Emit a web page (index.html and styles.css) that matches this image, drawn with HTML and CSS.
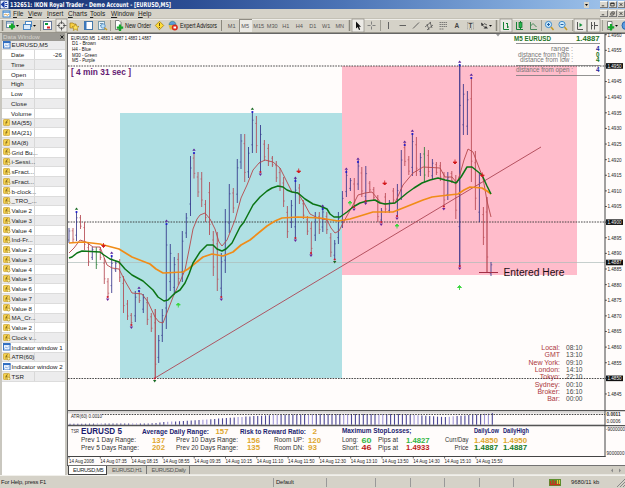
FILE: index.html
```html
<!DOCTYPE html>
<html lang="en">
<head>
<meta charset="utf-8">
<title>IKON Royal Trader</title>
<link rel="stylesheet" href="styles.css">
</head>
<body>
<div class="app">
  <header class="titlebar">
    <svg class="title-icon" viewBox="0 0 9 9"><rect x="0.5" y="0.5" width="8" height="8" fill="#e8eefc"/><path d="M1.5 4.5L4 2V7ZM5 2.5H7M5.5 4.5H7.5M5 6.5H7" fill="#1c3fa8" stroke="#1c3fa8" stroke-width="1.1"/></svg>
    <svg class="title-text" viewBox="0 0 170 9"><text x="0" y="7.2" textLength="161">132651: IKON Royal Trader - Demo Account - [EURUSD,M5]</text></svg>
    <span class="drop-btn"><svg viewBox="0 0 5 6"><path d="M1 2H4L2.5 4Z"/></svg></span>
    <span class="win-btns">
      <svg viewBox="0 0 8 7"><path d="M1.5 5.3H5" stroke="#111"/></svg>
      <svg viewBox="0 0 8 7"><path d="M1.5 1.5H6.3V5.5H1.5ZM1.5 2H6.3" stroke="#111" fill="none"/></svg>
      <svg viewBox="0 0 8 7"><path d="M2 1.5L6 5.5M6 1.5L2 5.5" stroke="#111" fill="none"/></svg>
    </span>
  </header>
  <nav class="menubar">
    <svg class="menu-icon" viewBox="0 0 9 8"><rect x="1" y="1" width="7" height="6" fill="#fff" stroke="#3d86cf"/><path d="M1 2.2H8" stroke="#3d86cf"/><path d="M2 5L4 4L5 5.5L7 4" stroke="#d08a20" stroke-width=".7" fill="none"/></svg>
    <span class="m-file"><u>F</u>ile</span><span class="m-view"><u>V</u>iew</span><span class="m-insert"><u>I</u>nsert</span><span class="m-charts"><u>C</u>harts</span><span class="m-tools"><u>T</u>ools</span><span class="m-window"><u>W</u>indow</span><span class="m-help"><u>H</u>elp</span>
    <span class="win-btns">
      <svg viewBox="0 0 8 7"><path d="M1.5 5.3H5" stroke="#111"/></svg>
      <svg viewBox="0 0 8 7"><path d="M1.5 3H5V5.8H1.5ZM3 2.5V1.2H6.5V4.5H5.5" stroke="#111" stroke-width=".8" fill="none"/></svg>
      <svg viewBox="0 0 8 7"><path d="M2 1.5L6 5.5M6 1.5L2 5.5" stroke="#111" fill="none"/></svg>
    </span>
  </nav>
  <div class="toolbar">
    <svg class="tb-standard" viewBox="0 0 219 15">
      <path class="grip" d="M2.5 2V13"/>
      <rect x="6.5" y="3.5" width="7" height="6" fill="#fff" stroke="#68a"/><path d="M7 5H13" stroke="#68a"/><path d="M12 5.5V11.5M9 8.5H15" stroke="#16a82a" stroke-width="2.3"/><path d="M16 7H19L17.500 8.700Z"/>
      <rect x="25.500" y="3.500" width="6" height="5" fill="#fff" stroke="#4a87c4"/><rect x="23.500" y="6.500" width="7" height="5" fill="#dcebfa" stroke="#4a87c4"/><path d="M33 7H36L34.500 8.700Z"/>
      <path class="sep" d="M40.500 2V13"/>
      <rect x="43.500" y="3.500" width="8" height="8" fill="#fff" stroke="#679"/><path d="M45 6H48" stroke="#0b9c3a" stroke-width="2"/><path d="M47 9.500H50" stroke="#d22" stroke-width="2"/>
      <rect class="pressed" x="56" y="1" width="11" height="13"/><circle cx="61.500" cy="7.500" r="3" fill="none" stroke="#444" stroke-width=".8"/><path d="M61.500 2.500V6M61.500 9V12.500M56.800 7.500H60M63 7.500H66.500" stroke="#444" stroke-width=".8"/>
      <path d="M70 5H73L74 6H76V10H70Z" fill="#f7cf45" stroke="#a07a14" stroke-width=".7"/><path d="M75.500 6L76.600 8.200L79 8.500L77.200 10L77.700 12.500L75.500 11.300L73.300 12.500L73.800 10L72.200 8.500L74.500 8.200Z" fill="#ffe25a" stroke="#a07a14" stroke-width=".6"/>
      <rect x="84.500" y="3.500" width="8" height="8" fill="#fff" stroke="#47a"/><path d="M85.500 4V11" stroke="#3a78c0" stroke-width="2"/>
      <rect x="98.500" y="3.500" width="6" height="8" fill="#e9f3fb" stroke="#79a"/><path d="M100 5.500H103M100 7.500H103" stroke="#79a"/><circle cx="103" cy="8" r="2.200" fill="#bfe2f7" stroke="#4a87c4" stroke-width=".8"/><path d="M104.500 9.700L107 12" stroke="#c79b2a" stroke-width="1.400"/>
      <path class="sep" d="M110.500 2V13"/>
      <path d="M115.500 2.500H119L121 4.500V11.500H115.500Z" fill="#fff" stroke="#666" stroke-width=".8"/><path d="M120 6.500V13M116.800 9.700H123.200" stroke="#14a52a" stroke-width="2.300"/>
      <text x="125" y="10" textLength="26" class="tb-text">New Order</text>
      <path d="M159.500 3.300L163.700 7.500L159.500 11.700L155.300 7.500Z" fill="#ffdc38" stroke="#a68112" stroke-width=".8"/><path d="M159.500 5V8M159.500 9V10" stroke="#6b5010"/>
      <path d="M169 7C169 2 176 2 176 7Z" fill="#5c9ad8" stroke="#276" stroke-width=".5"/><path d="M168.500 7.300H177V9L174 11.500H170Z" fill="#e6b83c"/><circle cx="174.800" cy="9.500" r="3" fill="#d92b1c"/><rect x="173.500" y="8.500" width="2.600" height="2" fill="#fff"/>
      <text x="180" y="10" textLength="37" class="tb-text">Expert Advisors</text>
    </svg>
    <div class="tb-frames">
      <i></i><span>M1</span><span class="on">M5</span><span>M15</span><span>M30</span><span>H1</span><span>H4</span><span>D1</span><span>W1</span><span>MN</span>
    </div>
    <svg class="tb-lines" viewBox="347 0 148 15">
      <path class="grip" d="M349.500 2V13"/>
      <rect class="pressed" x="352" y="1" width="12" height="13"/><path d="M356 3.500V10.500L357.700 9L359 12L360.200 11.500L359 8.700H361Z" fill="#111"/>
      <path d="M371.500 3.500V11.500M367.500 7.500H375.500" stroke="#777" stroke-width=".9"/><circle cx="371.500" cy="7.500" r="1" fill="#d5d2c8"/>
      <path class="sep" d="M380.500 2V13"/>
      <path d="M388.500 4V11M399.500 7.500H406M413 10.500L419 4.500" stroke="#555" stroke-width=".9"/>
      <path d="M425 9L431 4M427 12L433 7M427 6L429 12M430 4L432 10" stroke="#555" stroke-width=".8"/>
      <path d="M439.500 4.500H447M439.500 6.500H447M439.500 8.500H447M439.500 11H444" stroke="#666" stroke-width=".8" stroke-dasharray="1.500 .5"/>
      <text x="454.500" y="10" class="tb-bold">A</text>
      <rect x="467.500" y="4.500" width="6" height="6.500" fill="none" stroke="#777" stroke-width=".6" stroke-dasharray="1 1"/><text x="468.600" y="10" class="tb-bold">T</text>
      <path d="M481 4.500L484 6.500L481.500 8ZM483.500 10.500L486 8L488 10.500Z" fill="#333"/><path d="M482 7L486 10M484 5.500L487 7" stroke="#333" stroke-width=".7"/><path d="M489 7H492L490.500 8.700Z"/>
    </svg>
    <svg class="tb-chart" viewBox="495 0 130 15">
      <path class="grip" d="M496.500 2V13"/>
      <rect class="pressed" x="500" y="1" width="12" height="13"/><path d="M503.500 4V11.500H509M507.500 5V10M506 5.500H507.500M507.500 9H509" stroke="#178236" fill="none"/>
      <path d="M516.500 4V11.500H523M520.500 3V11" stroke="#178236" fill="none"/><rect x="519" y="4.500" width="3" height="5" fill="#29b44d" stroke="#10702a" stroke-width=".7"/>
      <path d="M530.500 4V11.500H537M530.500 8L533 5.500L536.500 9" stroke="#4b8a5a" fill="none"/>
      <path class="sep" d="M541.500 2V13"/>
      <circle cx="548.500" cy="6.500" r="3.100" fill="#cdeafb" stroke="#3c8acc"/><path d="M551 9L553.500 12" stroke="#c59a28" stroke-width="1.500"/><path d="M548.500 5V8M547 6.500H550" stroke="#2262a8"/>
      <circle cx="562" cy="6.500" r="3.100" fill="#cdeafb" stroke="#3c8acc"/><path d="M564.500 9L567 12" stroke="#c59a28" stroke-width="1.500"/><path d="M560.500 6.500H563.500" stroke="#2262a8"/>
      <path class="sep" d="M572.500 2V13"/>
      <rect class="pressed" x="574" y="1" width="12.500" height="13"/><path d="M577.500 4V11.500H583" stroke="#555" fill="none"/><path d="M579.500 5L582.500 7L579.500 9Z" fill="#14913a"/>
      <rect class="pressed" x="587.500" y="1" width="12.500" height="13"/><path d="M591.500 4V11.500M594.500 4V11.500M594.500 7.500H598M591.500 7.500H593" stroke="#555" fill="none"/>
      <path class="sep" d="M602.500 2V13"/>
      <path d="M607.500 3.500H612V11.500H607.500Z" fill="#fff" stroke="#666" stroke-width=".8"/><path d="M611 6V12.500M608 9.300H614.200" stroke="#14a52a" stroke-width="2.200"/><path d="M615 7H618L616.500 8.700Z"/>
      <circle cx="626" cy="7.500" r="4" fill="#5b9be0" stroke="#2565ad"/>
    </svg>
  </div>
  <main class="workspace">
    <aside class="data-window">
      <div class="dw-head"><span>Data Window</span><svg viewBox="0 0 4 4"><path d="M.5 .5L3.500 3.500M3.500 .5L.5 3.500" stroke="#222"/></svg></div>
      <div class="dw-rows" id="rows"></div>
    </aside>
    <section class="chart-pane">
      <svg id="chart" class="chart" viewBox="67 33 558 433" width="558" height="433">
        <rect x="68" y="34" width="557" height="432" fill="#fffcfb"/>
        <rect x="120" y="113" width="222" height="265" fill="#b0e0e4"/>
        <rect x="342" y="66" width="235" height="209" fill="#ffbccb"/>
        <path d="M68 262.500H605" stroke="#aebbb9" stroke-width=".7"/>
        <path class="level" d="M68 66H605M68 222H605M68 378.500H605"/>
        <g id="bars"></g>
        <path class="trend" d="M155 378L541 147"/>
        <polyline class="ma8" points="69,253 74,248 80,240 86,242 93,247 100,247 107,265 112,268 119,269 125,281 132,293 142,294 148,302 155,317 159,322 163,323 168,310 173,297 179,284 185,270 189,250 193,229 197,219 200,215 205,213 210,219 215,229 219,242 222,246 227,240 235,220 241,198 247,185 253,170 259,163 265,160 273,162 280,168 286,180 292,192 298,193 304,203 310,214 318,218 327,220 331,228 335,233 339,231 343,223 348,214 353,205 358,195 365,193 372,192 377,198 381,203 385,204 395,203 399,194 403,185 408,179 413,173 423,167 440,168 445,177 452,177 457,183 460,174 464,160 468,149 473,152 478,165 483,178 487,201 491,217"/>
        <polyline class="ma55" points="69,243 83,242 100,244 119,249 132,257 150,264 156,269 163,273 183,272 188,269 193,265 203,257 212,254 223,256 233,252 241,245 250,240 267,226 275,221 282,218 298,217 320,218 338,221 350,219 360,216 373,212 393,212 403,208 413,204 423,200 432,197 440,196 458,194 464,190 470,187 482,188 487,191 491,194"/>
        <polyline class="ma21" points="69,258 72,257 77,253 82,251 100,252 104,255 110,259 119,262 125,269 132,275 143,281 153,290 158,297 164,301 168,300 175,293 180,290 185,283 189,274 193,263 200,252 207,245 213,245 217,249 222,251 226,249 232,243 236,235 240,227 244,222 253,205 260,197 267,191 272,188 278,186 283,187 287,190 292,192 298,193 305,199 313,204 320,206 327,209 330,214 334,217 340,217 347,212 353,207 360,203 367,201 375,200 380,203 385,204 395,203 401,198 407,193 414,188 422,183 430,180 438,178 445,180 450,181 456,183 461,177 467,167 472,167 477,171 482,175 487,186 491,194"/>
        <g id="marks"></g>
        <path d="M479 272.500H498" stroke="#a33046"/>
        <text x="503.500" y="276" textLength="61" class="entered">Entered Here</text>

        <g class="info">
          <text x="71" y="39.500" textLength="80">EURUSD,M5&#160; 1.4883 1.4887 1.4883 1.4887</text>
          <text x="72" y="45.200" textLength="24">D1 - Brown</text>
          <text x="72" y="50.800" textLength="19">H4 - Blue</text>
          <text x="72" y="56.500" textLength="25">M30 - Green</text>
          <text x="72" y="62.300" textLength="23">M5 - Purple</text>
        </g>
        <text x="71" y="74.500" textLength="60" class="countdown">[ 4 min 31 sec ]</text>

        <path d="M496 34H500L498 36.500Z" fill="#999"/>
        <text x="514" y="41" textLength="37" class="pair">M5 EURUSD</text>
        <text x="576" y="41" textLength="23.500" class="pair">1.4887</text>
        <path d="M516 43.500H600M516 65.500H600M516 75.500H600" stroke="#777" stroke-width=".8"/>
        <g class="range">
          <text x="551" y="50.600" textLength="22">range :</text><text class="blue" x="596" y="50.600">4</text>
          <text x="518" y="56.500" textLength="55">distance from high :</text><text class="green" x="596" y="56.500">0</text>
          <text x="520" y="62.400" textLength="53">distance from low :</text><text class="green" x="596" y="62.400">4</text>
          <text x="516" y="72.300" textLength="57">distance from open :</text><text class="blue" x="596" y="72.300">4</text>
        </g>
        <g id="clocks" class="clocks"></g>

        <path d="M68 410.700H625M68 425.700H625" stroke="#555" stroke-width="1.300"/>
        <path d="M68 412.800H605M68 424.500H605" stroke="#999" stroke-width=".5"/>
        <g id="atr"></g>
        <path class="level" d="M102 414.500H605"/>
        <text x="71" y="418" textLength="31" class="tiny">ATR(60) 0.0010</text>
        <path d="M68 456.500H605.500M605 34V457" class="frame"/>
        <path d="M67.500 33V466M67 33.500H625" stroke="#666"/>
        <g id="tsr"></g>
        <g id="axis" class="axis"></g>
        <path d="M67 465.800H625" stroke="#444" stroke-width="1.200"/>
      </svg>
      <div class="tabs">
        <span class="tab active">EURUSD,M5</span><span class="tab h1">EURUSD,H1</span><span class="tab daily">EURUSD,Daily</span>
        <svg class="scroll" viewBox="0 0 16 9"><path d="M4 2.500L2 4.500L4 6.500ZM10 2.500L12 4.500L10 6.500Z" fill="#888"/></svg>
      </div>
    </section>
  </main>
  <footer class="status">
    <span class="help">For Help, press F1</span><span class="profile">Default</span><i></i><i class="s2"></i><i class="s2"></i><i class="s2"></i><i class="s2"></i><span class="conn"><svg viewBox="0 0 12 7"><rect width="12" height="7" fill="#5d8e2d"/><path d="M1 5.500H11M1.500 2V6M4 1V6M6.500 2V6" stroke="#c7301e" stroke-width="1.300"/><path d="M8.500 1V5M10.500 1V5" stroke="#e5c23a"/></svg>9680/11 kb</span>
    <svg class="resize" viewBox="0 0 9 9"><path d="M1 9L9 1M4 9L9 4M7 9L9 7" stroke="#888"/></svg>
  </footer>
</div>
<script src="script.js"></script>
</body>
</html>
```
FILE: styles.css
```css
* { box-sizing: border-box; }
body { margin: 0; overflow: hidden; font-family: "Liberation Sans", Arial, sans-serif; font-size: 6.6px; color: #222; }
svg { display: block; flex: none; }
.app { width: 625px; height: 488px; display: flex; flex-direction: column; background: #d5d2c8; }

.titlebar { height: 9px; flex: none; display: flex; align-items: center; background: linear-gradient(90deg, #17306f 0%, #2b4d93 30%, #4c74b6 55%, #84acdd 85%, #a3c6ec 100%); }
.title-icon { width: 9px; height: 9px; }
.title-text { width: 170px; height: 9px; margin-left: 1px; }
.title-text text { fill: #fff; font: bold 6.6px "DejaVu Sans Condensed", sans-serif; }
.drop-btn { margin-left: auto; margin-right: 11px; width: 5px; height: 6px; background: #d5d2c8; }
.win-btns { display: flex; gap: 1px; }
.win-btns svg { width: 8px; height: 7px; background: #d9d6cd; border-right: 1px solid #777; border-bottom: 1px solid #777; border-top: 1px solid #f8f8f4; }
.win-btns svg:last-child { width: 7px; }

.menubar { height: 9px; flex: none; display: flex; align-items: center; font-size: 6.5px; line-height: 9px; padding-left: 2px; }
.menubar > .win-btns { margin-left: auto; }
.menu-icon { width: 9px; height: 8px; margin-right: 2px; }
.m-file { width: 15px; } .m-view { width: 19px; } .m-insert { width: 21px; } .m-charts { width: 22px; }
.m-tools { width: 21px; } .m-window { width: 27px; } .m-help { width: 20px; }
.menubar u { text-decoration-thickness: .5px; text-underline-offset: 1px; }

.toolbar { height: 15px; flex: none; display: flex; border-top: 1px solid #c4c1b6; border-bottom: 1px solid #98958b; box-shadow: inset 0 1px #eeede8; }
.toolbar svg { height: 15px; margin-top: -1px; }
.tb-standard { width: 219px; } .tb-lines { width: 148px; } .tb-chart { width: 130px; }
.grip { stroke: #8b887e; stroke-width: 1.500; }
.sep { stroke: #99968c; stroke-width: .9; }
.pressed { fill: #eceae5; stroke: #8f8c83; stroke-width: .7; }
.tb-text { font-size: 6.700px; fill: #111; }
.tb-bold { font-size: 6.500px; font-weight: bold; fill: #444; }
.tb-frames { width: 128px; display: flex; padding-left: 1px; font-size: 5.600px; color: #555; line-height: 14px; text-align: center; }
.tb-frames i { width: 4px; border-left: 1.500px solid #8b887e; margin: 1px 0 1px 1px; }
.tb-frames span { width: 13.500px; }
.tb-frames .on { background: #eceae5; box-shadow: inset 1px 1px #8f8c83; }

.workspace { flex: 1; display: flex; min-height: 0; }
.data-window { width: 67px; flex: none; padding: 0 2px 0 2px; display: flex; flex-direction: column; background: #c9c7bf; border-left: 0; }
.dw-head { height: 7.500px; flex: none; background: #9c9a94; color: #d7d5ce; display: flex; align-items: center; justify-content: space-between; padding: 0 1px; line-height: 7px; font-size: 6.200px; }
.dw-head svg { width: 4px; height: 4px; }
.dw-rows { flex: 1; background: #fff; overflow: hidden; }
.row { height: 9.760px; display: flex; align-items: center; font-size: 6.200px; line-height: 9px; white-space: nowrap; border-bottom: .5px solid #dcdcdc; background: #fff; }
.row:nth-child(odd) { background: #ececed; }
.row .name { width: 33px; height: 100%; display: flex; align-items: center; gap: 1px; border-right: 1px solid #d8d8d8; padding-left: 1px; }
.row.plain .name { padding-left: 9px; }
.row.wide .name { width: 63px; border: 0; }
.row .val { flex: 1; text-align: right; padding-right: 3px; }
.row svg { width: 7.500px; height: 7.500px; }

.chart-pane { flex: 1; display: flex; flex-direction: column; }
.chart { font-family: "Liberation Sans", Arial, sans-serif; }
.level { stroke: #333; stroke-width: .9; stroke-dasharray: 1.600 1.100; fill: none; }
.frame { stroke: #444; stroke-width: 1; fill: none; }
.bar { stroke-width: 1; fill: none; }
.trend { stroke: #ad4553; stroke-width: .9; }
.ma8 { stroke: #b5474b; stroke-width: .9; fill: none; }
.ma55 { stroke: #f08c18; stroke-width: 1.700; fill: none; stroke-linejoin: round; }
.ma21 { stroke: #0b7415; stroke-width: 1.500; fill: none; stroke-linejoin: round; }
.entered { font-size: 10px; fill: #1b1015; }
.info text { font-size: 5.400px; fill: #111; }
.countdown { font-size: 8.600px; font-weight: bold; fill: #641a72; }
.pair { font-size: 7.400px; font-weight: bold; fill: #1f7426; }
.range text { font-size: 6.300px; fill: #777; }
.range .blue { font-weight: bold; fill: #23239a; }
.range .green { font-weight: bold; fill: #16741d; }
.clocks text { font-size: 7px; }
.clocks .zone { fill: #ac3840; text-anchor: end; }
.clocks .time { fill: #444; }
.tiny { font-size: 5.200px; fill: #222; }
.axis text { font-size: 5.500px; fill: #222; }
.axis .hot { fill: #fff; }
.axis .strong { font-weight: bold; }

.tabs { height: 9px; display: flex; align-items: center; font-size: 5.700px; line-height: 8px; color: #555; background: #d0cdc3; border-bottom: 1px solid #e9e8e2; white-space: nowrap; }
.tab { padding: 0 5px; letter-spacing: -.35px; }
.tab.active { width: 39px; margin-left: 1px; height: 9px; background: #fff; color: #222; border: 1px solid #444; border-top: 0; padding: 0 0 0 4px; }
.tab.h1 { width: 39.500px; border-right: 1px solid #777; }
.tab.daily { width: 43px; border-right: 1px solid #777; }
.scroll { width: 16px; height: 9px; margin-left: auto; }

.status { height: 13px; flex: none; display: flex; align-items: center; font-size: 5.800px; line-height: 9px; border-top: 1px solid #f1f0eb; }
.status .help { width: 273px; padding-left: 1px; letter-spacing: -.16px; }
.status .profile { width: 53px; border-left: 1px solid #999; padding-left: 2px; letter-spacing: -.1px; }
.status i { width: 49px; height: 9px; border-left: 1px solid #999; }
.status .s2 { width: 34.500px; }
.conn { display: flex; align-items: center; gap: 10px; border-left: 1px solid #999; padding-left: 35px; }
.conn svg { width: 12px; height: 7px; }
.resize { width: 9px; height: 9px; margin-left: auto; }
```
FILE: script.js
```js
const NAVY = '#2b2a85', RED = '#b2404a', GREEN = '#19752a';
const put = (id, html) => { document.getElementById(id).innerHTML = html; };

// Data window rows: [icon, label, value]
const rows = [['w', 'EURUSD,M5'], ['', 'Date', '-26'], ['', 'Time'], ['', 'Open'], ['', 'High'], ['', 'Low'], ['', 'Close'], ['', 'Volume'],
  ['f', 'MA(55)'], ['f', 'MA(21)'], ['f', 'MA(8)'], ['c', 'Grid Bu...'], ['c', 'i-Sessi...'], ['c', 'sFract...'], ['c', 'sFract...'], ['c', 'b-clock...'], ['c', '_TRO_...'],
  ['c', 'Value 2'], ['c', 'Value 3'], ['c', 'Value 4'], ['c', 'Ind-Fr...'], ['c', 'Value 2'], ['c', 'Value 3'], ['c', 'Value 4'], ['c', 'Value 5'], ['c', 'Value 6'], ['c', 'Value 7'], ['c', 'Value 8'],
  ['c', 'MA_Cr...'], ['c', 'Value 2'], ['c', 'Clock v...'], ['w', 'Indicator window 1'], ['c', 'ATR(60)'], ['w', 'Indicator window 2'], ['c', 'TSR']];
const glyph = '<rect x=".5" y=".5" width="6.500" height="6.500" rx=".8" fill="#f6d34e" stroke="#c69b28" stroke-width=".7"/><path d="M5 1.800Q3.800 1.500 3.600 3L3 5.800M2.700 3.500H4.800" stroke="#6b5212" stroke-width=".7" fill="none"/>';
const icons = {
  w: '<svg viewBox="0 0 8 8"><rect x=".5" y=".5" width="7" height="7" fill="#f3f8ff" stroke="#2f6dc0"/><path d="M0 1.500H8" stroke="#2f6dc0" stroke-width="1.500"/><path d="M1.500 6L3 4L4.500 5.500L6.500 3.500" stroke="#5a8fd6" stroke-width=".7" fill="none"/></svg>',
  f: `<svg viewBox="0 0 8 8">${glyph}</svg>`,
  c: `<svg viewBox="0 0 8 8">${glyph}<circle cx="6" cy="6" r="1.500" fill="#fff0a0" stroke="#a07c1a" stroke-width=".6"/></svg>`,
  '': ''
};
put('rows', rows.map(([i, n, v = '']) =>
  `<div class="row${i ? '' : ' plain'}${i === 'w' ? ' wide' : ''}"><span class="name">${icons[i]}<span>${n}</span></span><span class="val">${v}</span></div>`).join(''));

// Price bars: x, high, low, colour (b up, r down, g green)
const bars = `69 228 243 b|73 228 242 r|76.5 212 241 b|80.5 215 229 r|84.5 222 250 r|88.5 243 266 r|92.3 247 260 b|96.3 247 269 g|100.3 247 260 r|104.3 258 284 r|108 278 297 r|111.7 256 293 b|115.7 261 272 b|119.7 259 282 r|123.5 276 313 r|127.5 300 320 r|131.3 313 325 r|135.3 291 322 b|139.3 291 303 r|143.3 294 313 b|147.3 297 325 r|151.3 313 332 r|155.3 309 378 R|158.7 335 363 b|162.3 309 342 b|166.3 224 329 b|170.3 244 291 b|174.3 257 295 b|178.3 253 285 r|182.3 231 282 b|186.3 213 238 b|190.5 156 216 b|194 153 178.5 r|198 172 197 r|201.7 172 207 r|205.5 200 222 r|209.5 182 235 r|213.3 231 276 r|217.3 232 291 r|221.3 253 297 b|225.3 209 273 b|229.3 184 233 b|233.3 188 213 r|237.3 159 203 b|241 134 169 b|244.7 134 182 r|248.5 147 178 b|252.4 112 153 b|256.4 116 153 r|260.5 125 172 b|264.4 140 161 r|268.4 144 166 r|272.4 156 167 r|276.3 161 182 r|280 168 191 r|283.6 177 207 r|287.4 206 238 r|291.4 200 228 b|295.4 178 239 b|299.4 184 204 r|303.4 200 219 r|307.4 216 235 r|311.3 222 255 r|315.3 212 241 b|319.3 212 234 r|322.8 207 232 b|326.8 212 234 r|330.8 233 257 r|334.7 240 259 b|338.4 212 244 b|342.4 191 228 b|346.4 170 197 b|350.4 178 191 b|354.3 178 208 r|358.2 160 190 b|361.8 167 197 r|365.8 166 204 b|369.8 181 192 r|373.8 187 200 r|377.8 195 222 r|381.4 208 223 b|385.4 193 213 r|389.4 200 213 b|393.4 188 203 r|397.4 184 217 b|401.3 150 200 b|404.8 143 166 r|408.8 156 175 r|412.4 133 176 b|416.4 137 176 r|420.4 153 176 b|424.4 147 182 g|428.4 150 177 r|432.4 159 180 b|436.4 162 175 r|440.4 162 181 r|444 172 207 r|447.8 172 200 b|451.8 171 183 r|455.8 175 219 r|459.7 65 267 B|463.4 84 135 b|467.4 91 135 b|471.4 78 182 r|475.4 151 210 r|479.4 173 222 b|483.4 207 245 r|487 197 272 R|491 262 276 b`;
const tone = { b: NAVY, B: NAVY, r: RED, R: RED, g: GREEN };
put('bars', bars.split('|').map(s => {
  const [x, hi, lo, k] = s.split(' ');
  const h = +hi, l = +lo, q = (l - h) * .2, up = k.toLowerCase() === 'b';
  const o = up ? l - q : h + q, c = up ? h + q : l - q;
  return `<path class="bar" stroke="${tone[k]}" stroke-opacity=".8" d="M${x} ${h}V${l}"${'BR'.includes(k) ? ' style="stroke-width:1.4"' : ''}/><path stroke="${tone[k]}" stroke-opacity=".7" stroke-width=".7" d="M${x - 1.3} ${o}H${x}M${x} ${c}h1.300"/>`;
}).join(''));

// Fractals and signal arrows
const up = [[76.5, 209, 1], [111.7, 253], [139, 288], [166.5, 221], [194, 150], [252.4, 109, 1], [295.4, 178], [322.7, 206], [346.3, 169], [358, 159], [404.7, 142], [412.4, 131], [459.7, 62], [471.3, 75]];
const down = [[107.7, 299], [131.4, 327], [154.700, 380.500, 1], [221.3, 299], [260.4, 174], [295.4, 240], [311, 255], [334.7, 261.5, 1], [354, 209], [365.6, 203], [381.2, 224], [397, 218], [443.8, 208.5], [459.7, 268]];
const sell = [[103.5, 245.5], [298.7, 171], [384.7, 183], [455, 162], [482.3, 175]];
const buy = [[178.3, 305], [350, 203], [397, 226], [459.5, 287.5]];
put('marks',
  up.map(([x, y, g]) => `<path d="M${x - 1.7} ${y + .8}L${x} ${y - 1.6}L${x + 1.7} ${y + .8}Z" fill="${g ? '#176a22' : '#5a249a'}"/><circle cx="${x}" cy="${y + 3}" r="1.100" fill="#1c1ccc"/>`).join('') +
  down.map(([x, y, g]) => `<path d="M${x - 1.7} ${y - .4}L${x} ${y + 2}L${x + 1.7} ${y - .4}Z" fill="${g ? '#176a22' : '#6a249a'}"/><circle cx="${x}" cy="${y - 2}" r="1.100" fill="#cc1c30"/>`).join('') +
  sell.map(([x, y]) => `<path d="M${x} ${y - 2.5}V${y + 2}M${x - 2} ${y}L${x} ${y + 2}L${x + 2} ${y}Z" stroke="#d3161b" stroke-width=".8" fill="#d3161b"/>`).join('') +
  buy.map(([x, y]) => `<path d="M${x} ${y + 2.5}V${y - 2}M${x - 2} ${y}L${x} ${y - 2}L${x + 2} ${y}Z" stroke="#3ad63e" stroke-width=".9" fill="#3ad63e"/>`).join(''));

// ATR histogram, heights interpolated between key points
const atrKeys = [[68, 423.7], [150, 423.5], [165, 422], [200, 420], [240, 417], [272, 415], [320, 414], [400, 414], [420, 415.5], [445, 417], [470, 415], [493, 413]];
let atr = '';
for (let x = 70, n = 0; x < 493; x += 3.91, n++) {
  const i = atrKeys.findIndex(k => k[0] > x);
  const [a, b] = [atrKeys[i - 1], atrKeys[i]];
  const y = a[1] + (b[1] - a[1]) * (x - a[0]) / (b[0] - a[0]);
  atr += `<path d="M${x.toFixed(1)} ${y.toFixed(1)}V424.700" stroke="${n % 9 > 6 ? '#9f96d8' : '#4b4796'}" stroke-width="1.100"/>`;
}
put('atr', atr);

// World clocks
put('clocks', [['Local:', '08:10'], ['GMT', '13:10'], ['New York:', '09:10'], ['London:', '14:10'], ['Tokyo:', '22:10'], ['Sydney:', '00:10'], ['Broker:', '16:10'], ['Bar:', '00:00']]
  .map(([z, t], i) => { const y = 350 + i * 7.33; return `<text class="zone" x="560" y="${y}">${z}</text><text class="time" x="566" y="${y}" textLength="16.500">${t}</text>`; }).join(''));

// Axes
let axis = '';
for (let i = 0; i < 24; i++) {
  const y = 34.7 + i * 15.62, p = (1.4960 - i * .0005).toFixed(4), hot = [2, 12, 22].includes(i);
  if (hot) axis += `<rect x="606" y="${y - 2.8}" width="17" height="5.600" fill="#111"/>`;
  axis += `<path d="M605 ${y}h1.800" stroke="#444"/><text class="${hot ? 'hot' : ''}" x="607.500" y="${y + 1.9}" textLength="14">${p}</text>`;
}
axis += '<rect x="606" y="259.700" width="17" height="5.600" fill="#111"/><text class="hot" x="607.500" y="264.400" textLength="14">1.4887</text>';
axis += '<text class="strong" x="606.500" y="416.300" textLength="14">0.0011</text><text x="606.500" y="423.200" textLength="14">0.0006</text><text x="606" y="431" textLength="19">-9000000</text><text x="606.500" y="455" textLength="18">9000000</text>';
['2008', '07:35', '08:15', '08:55', '09:35', '10:15', '11:10', '11:50', '12:30', '13:10', '13:50', '14:30', '15:10', '15:50'].forEach((t, i) => {
  const x = 69 + i * 31.3;
  axis += `<path d="M${x} 456v2.500" stroke="#444" stroke-width=".8"/><text x="${x}" y="463" textLength="${i ? 26.500 : 25}">14 Aug ${t}</text>`;
});
put('axis', axis);

// Range and stop summary: x, baseline, width, size, colour, weight, text
const D = '#333', G = '#dea62e', N = '#1c1c70', L = '#32b544', R2 = '#c01a1a', K = '#157a25';
put('tsr', [
  [71, 433, 8, 5, D, 400, 'TSR'], [81, 434.2, 41, 8.3, N, 700, 'EURUSD 5'], [142, 433.7, 67, 6.8, N, 700, 'Average Daily Range:'], [215.5, 434, 13, 7.8, G, 700, '157'],
  [240, 433.7, 66, 6.8, N, 700, 'Risk to Reward Ratio:'], [312.5, 434, 4.5, 7.8, G, 700, '2'], [342, 433.4, 69.5, 6.8, N, 700, 'Maximum StopLosses;'],
  [474, 433.2, 25, 6.5, N, 700, 'DailyLow'], [503, 433.2, 26, 6.5, N, 700, 'DailyHigh'],
  [81, 442.3, 55, 6.8, D, 400, 'Prev 1 Day Range:'], [152, 442.7, 13, 7.4, G, 700, '137'], [176, 442.3, 62, 6.8, D, 400, 'Prev 10 Days Range:'], [247, 442.7, 13, 7.4, G, 700, '156'],
  [274, 442.3, 30, 6.8, D, 400, 'Room UP:'], [308, 442.7, 13, 7.4, G, 700, '120'], [342, 442.2, 16, 6.8, D, 400, 'Long:'], [361.5, 442.7, 10, 7.4, L, 700, '60'],
  [378, 442.2, 20, 6.8, D, 400, 'Pips at'], [406, 442.7, 23.5, 7.4, L, 700, '1.4827'], [445, 442, 23.5, 6.5, D, 400, 'Curr/Day'], [474, 442.7, 24, 7.4, G, 700, '1.4850'], [503, 442.7, 24, 7.4, G, 700, '1.4950'],
  [81, 450, 58, 6.8, D, 400, 'Prev 5 Days Range:'], [152, 450.4, 13, 7.4, G, 700, '202'], [176, 450, 62, 6.8, D, 400, 'Prev 20 Days Range:'], [247, 450.4, 13, 7.4, G, 700, '135'],
  [274, 450, 30, 6.8, D, 400, 'Room DN:'], [308, 450.4, 9, 7.4, G, 700, '93'], [342, 449.9, 17, 6.8, D, 400, 'Short:'], [361.5, 450.4, 10, 7.4, R2, 700, '46'],
  [378, 449.9, 20, 6.8, D, 400, 'Pips at'], [406, 450.4, 23.5, 7.4, R2, 700, '1.4933'], [454.5, 449.9, 14, 6.5, D, 400, 'Price'], [474, 450.4, 24, 7.4, K, 700, '1.4887'], [503, 450.4, 24, 7.4, K, 700, '1.4887']
].map(([x, y, w, s, c, b, t]) => `<text x="${x}" y="${y}" textLength="${w}" font-size="${s}" fill="${c}" font-weight="${b}">${t}</text>`).join(''));

// Fit glyphs, not only the gaps between them, to each label's width
document.querySelectorAll('text[textLength]').forEach(t => t.setAttribute('lengthAdjust', 'spacingAndGlyphs'));
```
